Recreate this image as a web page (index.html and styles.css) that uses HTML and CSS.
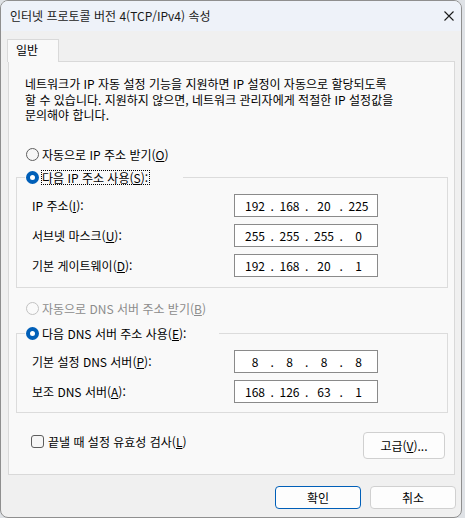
FILE: index.html
```html
<!DOCTYPE html>
<html lang="ko">
<head>
<meta charset="utf-8">
<title>인터넷 프로토콜 버전 4(TCP/IPv4) 속성</title>
<link rel="stylesheet" href="styles.css">
</head>
<body>
<div class="window">
  <div class="titlebar">
    <span class="title">인터넷 프로토콜 버전 4(TCP/IPv4) 속성</span>
    <svg class="close" viewBox="0 0 10 10" width="10" height="10"><path d="M0.5 0.5 L9.5 9.5 M9.5 0.5 L0.5 9.5" stroke="#1b1b1b" stroke-width="1.1" fill="none"/></svg>
  </div>
  <div class="content">
    <div class="tabs"><div class="tab">일반</div></div>
    <div class="panel">
      <div class="desc">
        <div class="desc-line">네트워크가 IP 자동 설정 기능을 지원하면 IP 설정이 자동으로 할당되도록</div>
        <div class="desc-line">할 수 있습니다. 지원하지 않으면, 네트워크 관리자에게 적절한 IP 설정값을</div>
        <div class="desc-line">문의해야 합니다.</div>
      </div>

      <div class="radio-row auto-ip"><span class="radio"></span><span>자동으로 IP 주소 받기(<u>O</u>)</span></div>

      <fieldset class="group group-ip">
        <legend class="legend"><div class="radio-row legend-row"><span class="radio checked"></span><span class="focus">다음 IP 주소 사용(<u>S</u>):</span></div></legend>
        <div class="field"><span class="label">IP 주소(<u>I</u>):</span>
          <div class="ipbox"><span>192</span><span>.</span><span>168</span><span>.</span><span>20</span><span>.</span><span>225</span></div></div>
        <div class="field"><span class="label">서브넷 마스크(<u>U</u>):</span>
          <div class="ipbox"><span>255</span><span>.</span><span>255</span><span>.</span><span>255</span><span>.</span><span>0</span></div></div>
        <div class="field"><span class="label">기본 게이트웨이(<u>D</u>):</span>
          <div class="ipbox"><span>192</span><span>.</span><span>168</span><span>.</span><span>20</span><span>.</span><span>1</span></div></div>
      </fieldset>

      <div class="radio-row auto-dns disabled"><span class="radio"></span><span>자동으로 DNS 서버 주소 받기(<u>B</u>)</span></div>

      <fieldset class="group group-dns">
        <legend class="legend"><div class="radio-row legend-row"><span class="radio checked"></span><span class="legend-text">다음 DNS 서버 주소 사용(<u>E</u>):</span></div></legend>
        <div class="field"><span class="label">기본 설정 DNS 서버(<u>P</u>):</span>
          <div class="ipbox"><span>8</span><span>.</span><span>8</span><span>.</span><span>8</span><span>.</span><span>8</span></div></div>
        <div class="field"><span class="label">보조 DNS 서버(<u>A</u>):</span>
          <div class="ipbox"><span>168</span><span>.</span><span>126</span><span>.</span><span>63</span><span>.</span><span>1</span></div></div>
      </fieldset>

      <div class="bottom-row">
        <div class="check"><span class="checkbox"></span><span>끝낼 때 설정 유효성 검사(<u>L</u>)</span></div>
        <div class="btn advanced">고급(<u>V</u>)...</div>
      </div>
    </div>
    <div class="footer">
      <div class="btn primary">확인</div>
      <div class="btn">취소</div>
    </div>
  </div>
</div>
</body>
</html>
```

FILE: styles.css
```css
* { box-sizing: border-box; }
html, body { margin: 0; padding: 0; }
body {
  width: 465px;
  height: 518px;
  overflow: hidden;
  background: #dfe2e6;
  font-family: "Noto Sans CJK KR", sans-serif;
  font-size: 12px;
  color: #000;
}
u { text-decoration: underline; text-underline-offset: 1px; }

.window {
  width: 462px;
  height: 518px;
  border: 1px solid #8f8f8f;
  border-radius: 8px;
  background: #f0f0f0;
  overflow: hidden;
  display: flex;
  flex-direction: column;
}
.titlebar {
  flex: none;
  height: 30px;
  background: #eef2f9;
  display: flex;
  align-items: center;
  padding-left: 9px;
}
.title { line-height: 16px; color: #1a1a1a; }
.close { margin-left: auto; margin-right: 7px; }

.content {
  flex: 1;
  padding: 8px 6px 0 7px;
  display: flex;
  flex-direction: column;
}
.tabs { display: flex; }
.tab {
  position: relative;
  z-index: 1;
  margin-left: -1px;
  margin-bottom: -1px;
  width: 52px;
  height: 23px;
  border: 1px solid #d9d9d9;
  border-bottom: none;
  background: #f9f9f9;
  padding-left: 8px;
  line-height: 20px;
}
.panel {
  width: 447px;
  border: 1px solid #d9d9d9;
  background: #f9f9f9;
  padding: 14px 6px 15px 7px;
}
.desc {
  margin: 0 0 0 9px;
  white-space: nowrap;
}
.desc-line {
  height: 15.5px;
  line-height: 15.5px;
}

.radio-row {
  display: flex;
  align-items: center;
  height: 20px;
  padding-left: 10px;
  gap: 3px;
  white-space: nowrap;
}
.auto-ip { margin-top: 21.5px; }
.auto-dns { margin-top: 10px; }
.disabled { color: #8c8c8c; }

.radio {
  flex: none;
  width: 13px;
  height: 13px;
  border-radius: 50%;
  border: 1px solid #5f5f5f;
  background: #f7f7f7;
}
.radio.checked { border: 4px solid #005fb8; background: #fff; }
.disabled .radio { border-color: #c2c2c2; background: #fafafa; }

.group {
  margin: 3px 0 0;
  padding: 0 0 10px 8px;
  border: 1px solid #dcdcdc;
  min-width: 0;
}
.group-dns { margin-top: 5px; padding-bottom: 9px; }
.legend { padding: 0 33px 0 1px; }
.legend-row { padding-left: 0; }
.focus {
  display: inline-block;
  margin-left: -1px;
  border: 1px dotted #000;
  line-height: 13px;
  padding: 0 1px 0 0;
}

.field {
  display: grid;
  grid-template-columns: 202px 144px;
  align-items: center;
  padding-left: 7px;
  margin-top: 7px;
  white-space: nowrap;
}
.ipbox {
  height: 23px;
  border: 1px solid #8a8a8a;
  background: #fff;
  display: grid;
  grid-template-columns: 26px 8.5px 26px 8.5px 26px 8.5px 26px;
  padding-left: 7px;
  line-height: 21px;
  text-align: center;
}

.bottom-row {
  margin-top: 19px;
  display: flex;
  justify-content: space-between;
  align-items: flex-start;
  padding-left: 15px;
  padding-right: 3px;
}
.check {
  display: flex;
  align-items: center;
  height: 18px;
  gap: 4px;
}
.checkbox {
  width: 13px;
  height: 13px;
  border: 1px solid #5d5d5d;
  border-radius: 3px;
  background: #f6f6f6;
}
.btn {
  display: flex;
  align-items: center;
  justify-content: center;
  border: 1px solid #d0d0d0;
  border-radius: 4px;
  background: #fdfdfd;
  white-space: nowrap;
}
.advanced { width: 82px; height: 27px; }

.footer {
  display: flex;
  justify-content: flex-end;
  gap: 9px;
  margin-top: 11px;
  margin-right: -1px;
}
.footer .btn { width: 86px; height: 23px; }
.footer .btn.primary { border-color: #005fb8; }
```
